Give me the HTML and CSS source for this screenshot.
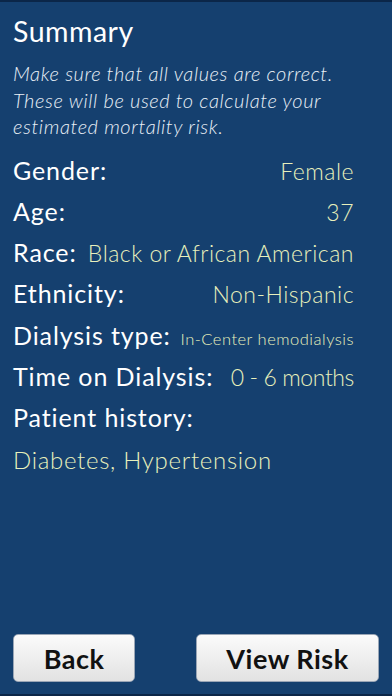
FILE: index.html
```html
<!DOCTYPE html>
<html>
<head>
<meta charset="utf-8">
<link rel="stylesheet" href="styles.css">
</head>
<body>
<div class="screen">
  <main class="content">
    <h1 class="title">Summary</h1>
    <p class="intro">Make sure that all values are correct.<br>These will be used to calculate your<br>estimated mortality risk.</p>
    <div class="rows">
      <div class="row"><span class="label">Gender:</span><span class="value">Female</span></div>
      <div class="row"><span class="label">Age:</span><span class="value">37</span></div>
      <div class="row"><span class="label">Race:</span><span class="value">Black or African American</span></div>
      <div class="row"><span class="label">Ethnicity:</span><span class="value">Non-Hispanic</span></div>
      <div class="row"><span class="label">Dialysis type:</span><span class="value small">In-Center hemodialysis</span></div>
      <div class="row"><span class="label">Time on Dialysis:</span><span class="value tight">0 - 6 months</span></div>
      <div class="row"><span class="label">Patient history:</span></div>
      <div class="row"><span class="value wide">Diabetes, Hypertension</span></div>
    </div>
  </main>
  <footer class="buttons">
    <button class="btn back">Back</button>
    <button class="btn risk">View Risk</button>
  </footer>
</div>
</body>
</html>
```
FILE: styles.css
```css
html, body {
  margin: 0;
  padding: 0;
  background: #15406f;
}
.screen {
  width: 392px;
  height: 696px;
  box-sizing: border-box;
  border-top: 2px solid #0b2648;
  border-bottom: 2px solid #0b2648;
  background: #15406f;
  display: flex;
  flex-direction: column;
  font-family: Lato, "Open Sans", sans-serif;
  color: #ffffff;
}
.content {
  flex: 1;
  padding: 0 38px 0 13px;
}
.title {
  margin: 11px 0 0;
  font-size: 28.5px;
  font-weight: 400;
  line-height: 36px;
  letter-spacing: 0.5px;
}
.intro {
  margin: 11px 0 0;
  font-size: 20px;
  font-style: italic;
  font-weight: 300;
  line-height: 26.5px;
  letter-spacing: 0.6px;
  color: #eaf0f7;
  white-space: nowrap;
}
.rows {
  margin-top: 10px;
  display: flex;
  flex-direction: column;
}
.row {
  display: flex;
  justify-content: space-between;
  align-items: baseline;
  height: 41.3px;
  line-height: 41.3px;
  white-space: nowrap;
}
.label {
  font-size: 25px;
  font-weight: 400;
  letter-spacing: 0.9px;
}
.value {
  font-size: 23px;
  font-weight: 300;
  letter-spacing: 0.5px;
  color: #e8f0bc;
}
.value.small {
  font-size: 16.5px;
  letter-spacing: 0.5px;
}
.value.tight {
  letter-spacing: -0.4px;
}
.value.wide {
  font-size: 24px;
  letter-spacing: 0.7px;
}
.buttons {
  display: flex;
  justify-content: space-between;
  padding: 0 13px 12px 13px;
}
.btn {
  height: 48px;
  border: 1px solid #9aa6b6;
  border-radius: 5px;
  background: linear-gradient(#fbfbfb, #e2e2e2);
  font-family: Lato, "Open Sans", sans-serif;
  font-weight: 700;
  font-size: 27px;
  letter-spacing: 0.5px;
  color: #111111;
  padding: 0;
}
.back {
  width: 122px;
}
.risk {
  width: 183px;
}
```
